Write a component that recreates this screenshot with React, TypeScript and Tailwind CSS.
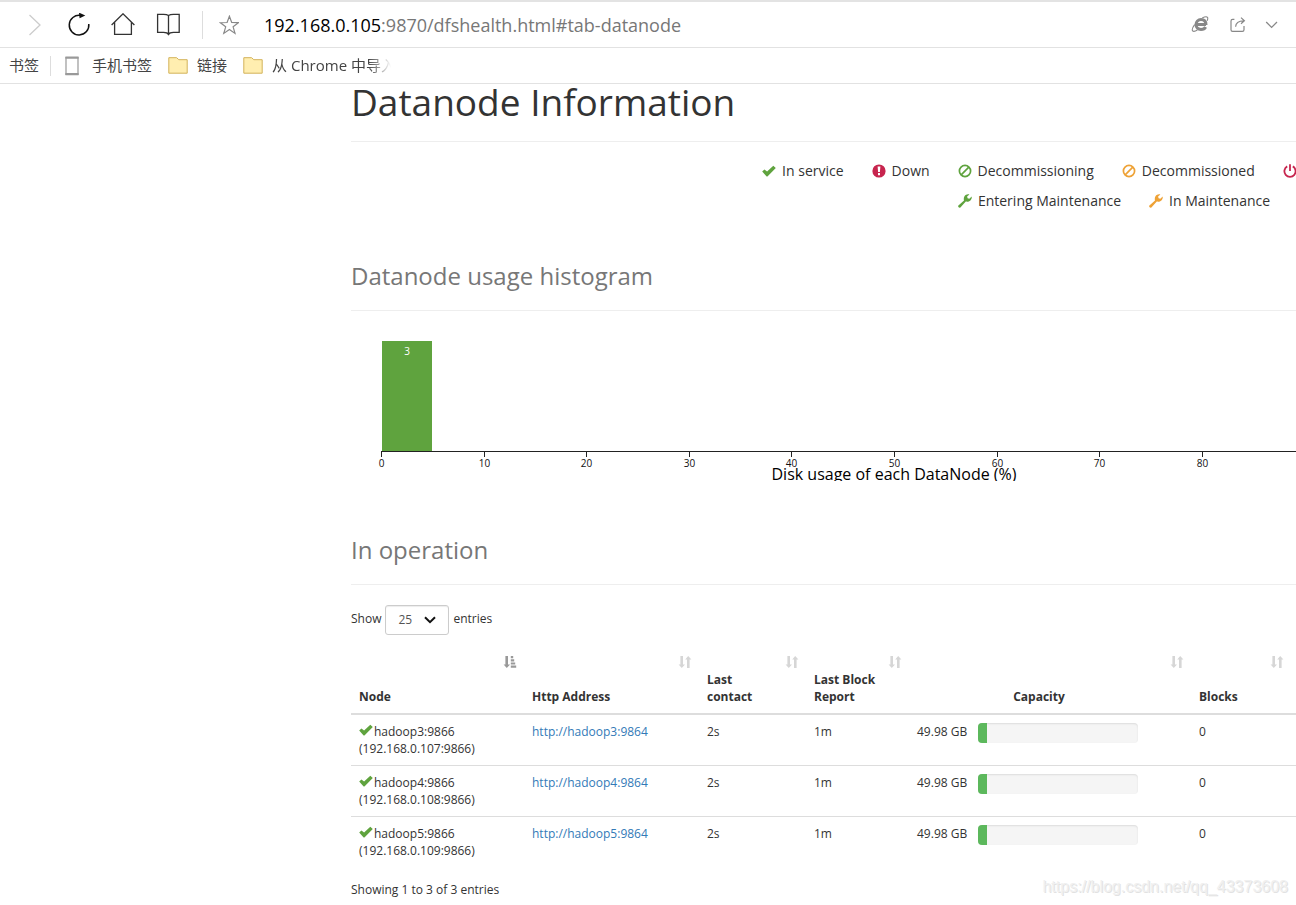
import type { ReactNode } from "react";

type IconProps = { className?: string };

const DATANODES = [
  { host: "hadoop3", ip: "192.168.0.107", contact: "2s", report: "1m", capacity: "49.98 GB", used: 5.6, blocks: 0 },
  { host: "hadoop4", ip: "192.168.0.108", contact: "2s", report: "1m", capacity: "49.98 GB", used: 5.6, blocks: 0 },
  { host: "hadoop5", ip: "192.168.0.109", contact: "2s", report: "1m", capacity: "49.98 GB", used: 5.6, blocks: 0 },
];

const TICKS = [0, 10, 20, 30, 40, 50, 60, 70, 80, 90, 100];

// Chart geometry, in svg units
const CHART_WIDTH = 1086;
const CHART_LEFT = 30;
const AXIS_WIDTH = CHART_WIDTH - 2 * CHART_LEFT;

export default function App() {
  return (
    <div className="relative min-h-screen w-full overflow-hidden bg-white font-['Open_Sans','Noto_Sans_CJK_SC',sans-serif] text-[12px] leading-[17px] text-[#333]">
      <AddressBar />
      <BookmarkBar />

      <main className="pl-[351px]">
        <div className="min-w-[1140px]">
          <h1 className="border-b border-[#eee] pb-[21px] text-[37px] leading-[36px]">Datanode Information</h1>
          <Legend />

          <SectionTitle className="mt-[46px]">Datanode usage histogram</SectionTitle>
          <Histogram />

          <SectionTitle className="mt-[55px]">In operation</SectionTitle>
          <div className="mt-5 flex items-start gap-1 leading-[28px]">
            <label htmlFor="page-size">Show</label>
            <div className="relative">
              <select
                id="page-size"
                defaultValue="25"
                className="block h-[30px] w-16 appearance-none rounded-[3px] border border-[#ccc] bg-white pl-3 text-[12px] text-[#555] shadow-[inset_0_1px_1px_rgba(0,0,0,0.075)]"
              >
                <option>25</option>
                <option>50</option>
                <option>100</option>
              </select>
              <svg viewBox="0 0 12 8" className="pointer-events-none absolute right-[13px] top-[11px] h-2 w-3" fill="none" stroke="#111" strokeWidth="2">
                <path d="M1 1.2 6 6.2 11 1.2" />
              </svg>
            </div>
            <span>entries</span>
          </div>

          <NodeTable />
          <p className="mt-[14px]">Showing 1 to 3 of 3 entries</p>
        </div>
      </main>

      <p className="absolute bottom-2 right-2 font-['Liberation_Sans',sans-serif] text-[16px] leading-[20px] text-[#f0f0f0] [text-shadow:1px_1px_0_#e2e2e2]">
        https://blog.csdn.net/qq_43373608
      </p>
    </div>
  );
}

function AddressBar() {
  return (
    <header className="flex h-12 items-center border-b border-t-2 border-b-[#e2e2e2] border-t-[#e3e3e3] pl-[28px] pr-[17px]">
      <button type="button" aria-label="Forward" className="text-[#ccc]">
        <svg viewBox="0 0 14 22" className="h-[22px] w-[14px]" fill="none" stroke="currentColor" strokeWidth="1.3">
          <path d="M1.5 1 12 11 1.5 21" />
        </svg>
      </button>
      <button type="button" aria-label="Reload" className="ml-[25px] text-[#111]">
        <svg viewBox="0 0 24 24" className="h-6 w-6" fill="none" stroke="currentColor" strokeWidth="1.5">
          <path d="M13.5 2.4A9.8 9.8 0 1 0 21.8 11" />
          <path d="M12 -.4 18.3 2.4 12.6 5.2Z" fill="currentColor" stroke="none" />
        </svg>
      </button>
      <button type="button" aria-label="Home" className="ml-5 text-[#333]">
        <svg viewBox="0 0 24 24" className="h-6 w-6" fill="none" stroke="currentColor" strokeWidth="1.3">
          <path d="M.6 12 12 .8 23.4 12M3.6 9.5V21.4H20.4V9.5" />
        </svg>
      </button>
      <button type="button" aria-label="Reading list" className="ml-[21px] text-[#333]">
        <svg viewBox="0 0 24 24" className="h-6 w-6" fill="none" stroke="currentColor" strokeWidth="1.3">
          <path d="M12.5 2.6C11.2 1.6 9.6 1.4 7.6 1.4H1.6V19.4H7.6C9.8 19.4 11.6 19.8 12.5 21.4 13.4 19.8 15.2 19.4 17.4 19.4H23.2V1.4H17.4C15.4 1.4 13.8 1.6 12.5 2.6V22" />
        </svg>
      </button>
      <span className="ml-[22px] h-7 w-px bg-[#ddd]" />
      <button type="button" aria-label="Add bookmark" className="ml-[16px] text-[#888]">
        <svg viewBox="0 0 20 20" className="h-5 w-5" fill="none" stroke="currentColor" strokeWidth="1.2">
          <path d="M10.4 1.2 12.7 7.5 19.4 7.7 14.1 11.8 16 18.4 10.4 14.5 4.8 18.4 6.7 11.8 1.4 7.7 8.1 7.5Z" />
        </svg>
      </button>
      <p className="ml-[25px] text-[18px] leading-6 text-[#777]">
        <span className="text-black">192.168.0.105</span>:9870/dfshealth.html#tab-datanode
      </p>
      <div className="ml-auto flex items-center text-[#888]">
        <button type="button" aria-label="Compatibility mode">
          <svg viewBox="0 0 18 18" className="h-[18px] w-[18px]" fill="none" stroke="currentColor">
            <path d="M15 8.6H5.6M14.6 11C13.8 12.6 12 13.4 10 13.4 7 13.4 5 11.4 5 8.6 5 5.6 7.2 3.6 10 3.6 13 3.6 15 5.6 15 9" strokeWidth="3" />
            <path d="M3.6 8.6C1.6 11.4 .6 14 1.8 15 2.8 15.8 4.8 15 6.4 14M11.2 1.9C13.6 .7 15.8 .4 16.5 1.3 17 2 16.8 3.2 16.2 4.8" strokeWidth="1.1" />
          </svg>
        </button>
        <button type="button" aria-label="Share" className="ml-5">
          <svg viewBox="0 0 18 18" className="h-[18px] w-[18px]" fill="none" stroke="currentColor" strokeWidth="1.2">
            <path d="M5.4 3.4H3.6C2.6 3.4 2 4 2 5V13.8C2 14.8 2.6 15.4 3.6 15.4H13.4C14.4 15.4 15 14.8 15 13.8V10" />
            <path d="M6.6 10.8C6.8 7 9 4.8 14.8 4.8M12 1.6 15.4 4.8 12 7.8" />
          </svg>
        </button>
        <button type="button" aria-label="More" className="ml-[18px]">
          <svg viewBox="0 0 14 8" className="h-2 w-[14px]" fill="none" stroke="currentColor" strokeWidth="1.3">
            <path d="M1.2 1 6.6 6.4 12 1" />
          </svg>
        </button>
      </div>
    </header>
  );
}

function BookmarkBar() {
  return (
    <nav className="flex h-9 items-center border-b border-[#e2e2e2] pl-[9px] text-[15px] text-[#444]">
      <a href="#bookmarks">书签</a>
      <span className="ml-[11px] h-5 w-px bg-[#ddd]" />
      <a href="#mobile" className="ml-[14px] flex items-center gap-[13px]">
        <svg viewBox="0 0 14 20" className="h-5 w-[14px]" fill="none" stroke="#999">
          <path d="M1 1V19M13 1V19" strokeWidth="1.2" />
          <path d="M.4 1.6H13.6M.4 18.2H13.6" strokeWidth="2.2" />
        </svg>
        手机书签
      </a>
      <a href="#links" className="ml-4 flex items-center gap-[9px]">
        <Folder />
        链接
      </a>
      <a href="#imported" className="ml-4 flex w-[148px] items-center gap-[9px] overflow-hidden whitespace-nowrap [mask-image:linear-gradient(to_right,black_85%,transparent)]">
        <Folder />
        从 Chrome 中导入
      </a>
    </nav>
  );
}

function Folder() {
  return (
    <svg viewBox="0 0 20 18" className="h-[18px] w-5 shrink-0" fill="#ffeeb0" stroke="#d3b25a">
      <path d="M.8 .7H8.6L10.8 2.7H19.2V16.2H.8Z" />
    </svg>
  );
}

function SectionTitle({ className, children }: { className: string; children: ReactNode }) {
  return (
    <h2 className={`border-b border-[#eee] pb-5 text-[24px] leading-[28px] text-[#777] ${className}`}>{children}</h2>
  );
}

function Legend() {
  return (
    <div className="ml-auto mt-[14px] flex w-[754px] flex-col items-center text-[14px] leading-[30px]">
      <ul className="flex gap-7 whitespace-nowrap">
        <LegendItem icon={<CheckIcon className="h-[14px] w-[14px] text-[#5fa33e]" />}>In service</LegendItem>
        <LegendItem icon={<DownIcon className="h-[14px] w-[14px] text-[#c7254e]" />}>Down</LegendItem>
        <LegendItem icon={<BanIcon className="h-[14px] w-[14px] text-[#5fa33e]" />}>Decommissioning</LegendItem>
        <LegendItem icon={<BanIcon className="h-[14px] w-[14px] text-[#eea236]" />}>Decommissioned</LegendItem>
        <LegendItem icon={<PowerIcon className="h-[14px] w-[14px] text-[#c7254e]" />}>Decommissioned &amp; dead</LegendItem>
      </ul>
      <ul className="flex gap-7 whitespace-nowrap">
        <LegendItem icon={<WrenchIcon className="h-[14px] w-[14px] text-[#5fa33e]" />}>Entering Maintenance</LegendItem>
        <LegendItem icon={<WrenchIcon className="h-[14px] w-[14px] text-[#eea236]" />}>In Maintenance</LegendItem>
      </ul>
    </div>
  );
}

function LegendItem({ icon, children }: { icon: ReactNode; children: ReactNode }) {
  return (
    <li className="flex items-center gap-[6px]">
      {icon}
      {children}
    </li>
  );
}

function Histogram() {
  return (
    <svg width={CHART_WIDTH} height="150" className="mt-5 block overflow-hidden">
      <rect x="31" y="10" width="50" height="110" fill="#5fa33e" />
      <text x="56" y="24" textAnchor="middle" fontSize="10" fill="#fff">
        3
      </text>
      <path d={`M${CHART_LEFT} 120.5H${CHART_LEFT + AXIS_WIDTH}`} stroke="#222" />
      {TICKS.map((tick) => {
        const x = Math.round(CHART_LEFT + (tick / 100) * AXIS_WIDTH);
        return (
          <g key={tick}>
            <path d={`M${x + 0.5} 120V126`} stroke="#222" />
            <text x={x + 0.5} y="136" textAnchor="middle" fontSize="10" fill="#111">
              {tick}
            </text>
          </g>
        );
      })}
      <text x={CHART_WIDTH / 2} y="149" textAnchor="middle" fontSize="16" fill="#000">
        Disk usage of each DataNode (%)
      </text>
    </svg>
  );
}

function NodeTable() {
  return (
    <table className="mt-[11px] w-full table-fixed border-collapse">
      <colgroup>
        <col className="w-[173px]" />
        <col className="w-[175px]" />
        <col className="w-[107px]" />
        <col className="w-[103px]" />
        <col className="w-[282px]" />
        <col className="w-[100px]" />
        <col />
      </colgroup>
      <thead>
        <tr className="border-b-2 border-[#ddd]">
          <HeaderCell sorted>Node</HeaderCell>
          <HeaderCell>Http Address</HeaderCell>
          <HeaderCell>
            Last
            <br />
            contact
          </HeaderCell>
          <HeaderCell>
            Last Block
            <br />
            Report
          </HeaderCell>
          <HeaderCell centered>Capacity</HeaderCell>
          <HeaderCell>Blocks</HeaderCell>
          <td />
        </tr>
      </thead>
      <tbody>
        {DATANODES.map((node) => (
          <tr key={node.host} className="border-b border-[#ddd] align-top last:border-b-0">
            <td className="p-2">
              <div className="flex items-start gap-px">
                <CheckIcon className="h-[14px] w-[14px] text-[#5fa33e]" />
                {node.host}:9866
              </div>
              ({node.ip}:9866)
            </td>
            <td className="p-2">
              <a href={`http://${node.host}:9864`} className="text-[#337ab7]">
                http://{node.host}:9864
              </a>
            </td>
            <td className="p-2">{node.contact}</td>
            <td className="p-2">{node.report}</td>
            <td className="px-2">
              <div className="flex items-start pt-2">
                <span className="w-[61px] whitespace-nowrap">{node.capacity}</span>
                <div className="h-5 w-40 overflow-hidden rounded-[4px] bg-[#f5f5f5] shadow-[inset_0_1px_2px_rgba(0,0,0,0.1)]">
                  <div className="h-full bg-[#5cb85c]" style={{ width: `${node.used}%` }} />
                </div>
              </div>
            </td>
            <td className="p-2">{node.blocks}</td>
            <td />
          </tr>
        ))}
      </tbody>
    </table>
  );
}

function HeaderCell({
  sorted = false,
  centered = false,
  children,
}: {
  sorted?: boolean;
  centered?: boolean;
  children: ReactNode;
}) {
  return (
    <th scope="col" className="p-0">
      <button
        type="button"
        className={`flex h-[67px] w-full flex-col justify-between pb-2 pl-2 pr-[7px] pt-[9px] font-bold ${centered ? "text-center" : "text-left"}`}
      >
        {sorted ? (
          <SortedIcon className="-mb-4 h-[14px] w-[14px] shrink-0 self-end text-[#999]" />
        ) : (
          <SortIcon className="-mb-4 h-[14px] w-[14px] shrink-0 self-end text-[#d6d6d6]" />
        )}
        <span className={centered ? "w-[244px]" : ""}>{children}</span>
      </button>
    </th>
  );
}

function CheckIcon({ className }: IconProps) {
  return (
    <svg viewBox="0 0 14 14" className={className} fill="currentColor">
      <path d="M.2 7.6 2.4 5.4 5.1 7.5 11.3 1.7 13.8 4.1 5.7 12.2Q5 12.8 4.4 12.2Z" />
    </svg>
  );
}

function DownIcon({ className }: IconProps) {
  return (
    <svg viewBox="0 0 14 14" className={className} fill="currentColor">
      <circle cx="7" cy="7" r="6.6" />
      <path d="M5.6 2.6H8.4L7.9 7.9H6.1ZM6 9H8V11.2H6Z" fill="#fff" />
    </svg>
  );
}

function BanIcon({ className }: IconProps) {
  return (
    <svg viewBox="0 0 14 14" className={className} fill="none" stroke="currentColor" strokeWidth="1.7">
      <circle cx="7" cy="7" r="5.6" />
      <path d="M3.2 10.8 10.8 3.2" />
    </svg>
  );
}

function PowerIcon({ className }: IconProps) {
  return (
    <svg viewBox="0 0 14 14" className={className} fill="none" stroke="currentColor" strokeWidth="1.8">
      <path d="M4.2 2.4A5.6 5.6 0 1 0 9.8 2.4M7 .2V7" />
    </svg>
  );
}

function WrenchIcon({ className }: IconProps) {
  return (
    <svg viewBox="0 0 14 14" className={className} fill="currentColor">
      <path d="M.4 11.6 6 6.4C5.4 4.4 6 2.4 7.6 1.1 8.8.2 10.2 0 11.4.4L9.1 2.6 9.6 4.3 11.3 4.8 13.7 2.6C13.9 4 13.4 5.4 12.4 6.4 11.1 7.7 9.4 8 7.8 7.6L2.4 13.4Q1.4 14 .6 13.2 -.2 12.4 .4 11.6Z" />
    </svg>
  );
}

function SortIcon({ className }: IconProps) {
  return (
    <svg viewBox="0 0 14 14" className={className} fill="currentColor">
      <path d="M2.4 1H5V9.4H7L3.8 13 .6 9.4H2.4ZM9 13H11.6V4.6H13.4L10.2 1 7.2 4.6H9Z" />
    </svg>
  );
}

function SortedIcon({ className }: IconProps) {
  return (
    <svg viewBox="0 0 14 14" className={className} fill="currentColor">
      <path d="M2.4 1H5V9.4H7L3.8 13 .6 9.4H2.4ZM7.8 1H10.2V3.2H7.8ZM7.8 4.2H11.2V6.4H7.8ZM7.8 7.4H12.2V9.6H7.8ZM7.8 10.6H13.2V12.8H7.8Z" />
    </svg>
  );
}
